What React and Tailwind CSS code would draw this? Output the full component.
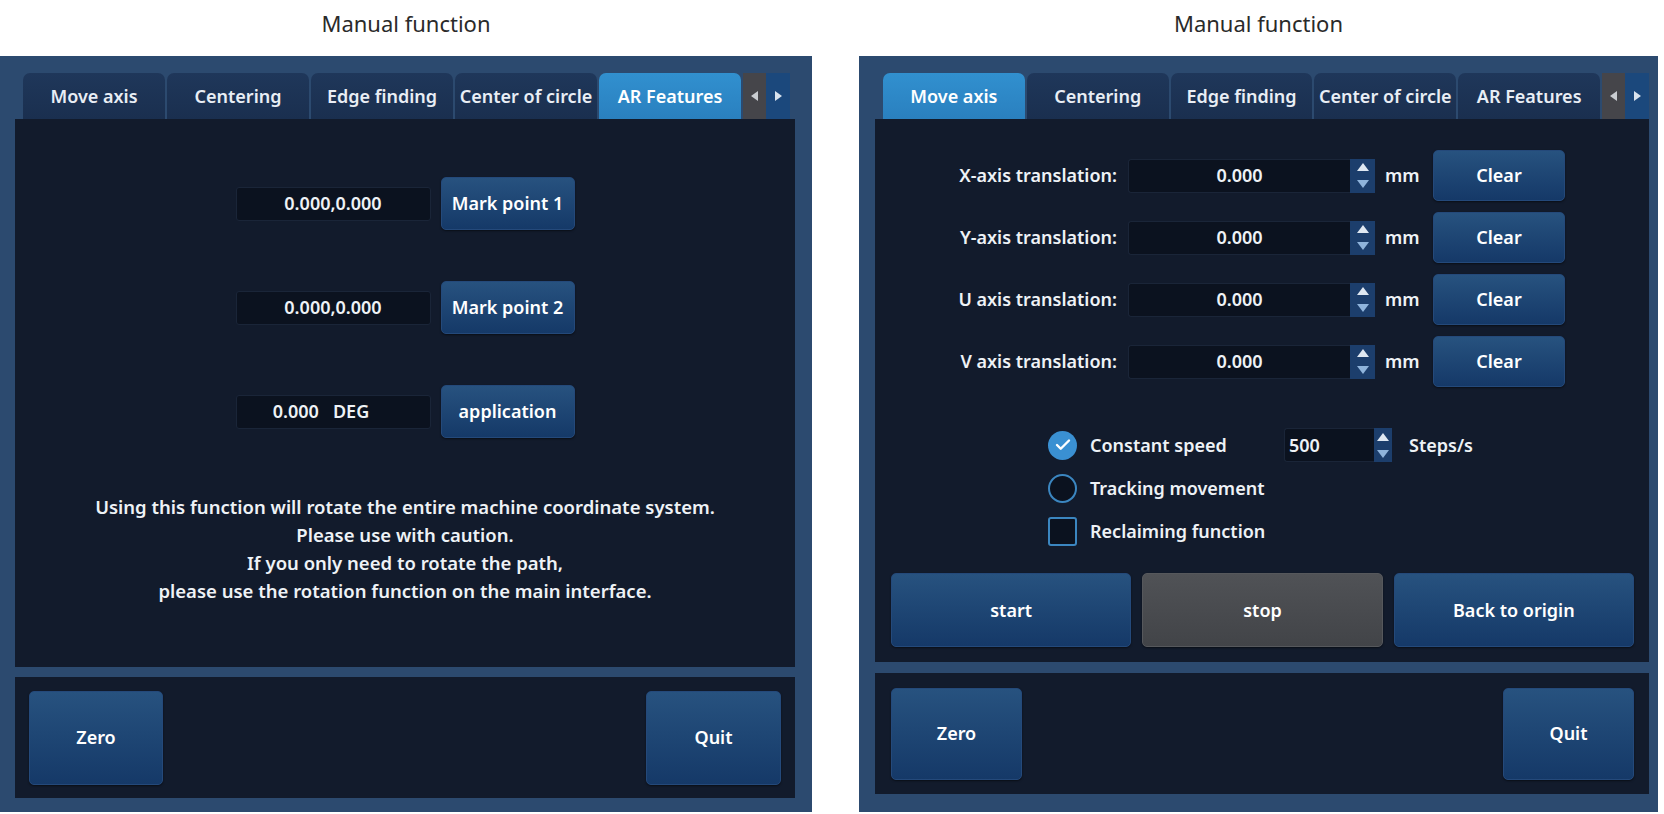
import React from "react";
import { Check } from "lucide-react";

const FONT = { fontFamily: '"Noto Sans", "Open Sans", sans-serif' };

const tabNames = ["Move axis", "Centering", "Edge finding", "Center of circle", "AR Features"];

function Tabs({ active }) {
  return (
    <div className="flex h-[46px] shrink-0 items-stretch pl-[8px]">
      {tabNames.map((name) => (
        <div
          key={name}
          className={`mr-[2px] flex w-[142px] items-center justify-center rounded-t-[7px] text-[18px] font-semibold whitespace-nowrap ${
            name === active
              ? "bg-linear-to-b from-[#3190cf] to-[#2a80bf] text-white"
              : "bg-linear-to-b from-[#1f375a] to-[#1a2f4f] text-[#e9eef5]"
          }`}
        >
          {name}
        </div>
      ))}
      {/* tab scroller */}
      <div className="flex w-[23px] items-center justify-center bg-[#45454a]">
        <svg width="7" height="10" viewBox="0 0 7 10">
          <polygon points="7,0 0,5 7,10" fill="#c9ccd1" />
        </svg>
      </div>
      <div className="flex w-[24px] items-center justify-center bg-[#1b487c]">
        <svg width="7" height="10" viewBox="0 0 7 10">
          <polygon points="0,0 7,5 0,10" fill="#d9e3ee" />
        </svg>
      </div>
    </div>
  );
}

function Btn({ children, className = "", gray }) {
  return (
    <div
      className={`flex items-center justify-center rounded-[5px] border text-[18px] font-semibold text-white shadow-[0_1px_2px_rgba(0,0,0,0.5)] ${
        gray
          ? "border-[#56585c] bg-linear-to-b from-[#505256] to-[#424448]"
          : "border-[#24497a] bg-linear-to-b from-[#27527f] to-[#153968]"
      } ${className}`}
    >
      {children}
    </div>
  );
}

function Spinner({ w = "w-[25px]" }) {
  return (
    <div className={`flex h-full ${w} flex-col bg-[#1c3e6c]`}>
      <div className="flex flex-1 items-center justify-center">
        <svg width="12" height="8" viewBox="0 0 12 8">
          <polygon points="0,8 6,0 12,8" fill="#dfe8f2" />
        </svg>
      </div>
      <div className="flex flex-1 items-center justify-center">
        <svg width="12" height="8" viewBox="0 0 12 8">
          <polygon points="0,0 12,0 6,8" fill="#8fb4dc" />
        </svg>
      </div>
    </div>
  );
}

function Title() {
  return (
    <div className="h-[56px] shrink-0 pt-[8px] text-center text-[22px] leading-[30px] text-[#2a2a2a]">
      Manual function
    </div>
  );
}

function MarkRow({ value, label }) {
  return (
    <div className="flex h-[53px] items-center gap-[10px]">
      <div className="flex h-[34px] w-[195px] items-center justify-center rounded-[3px] border border-[#1a2538] bg-[#0b121f] text-[18px] font-semibold text-[#eef2f6]">
        {value}
      </div>
      <Btn className="h-[53px] w-[134px]">{label}</Btn>
    </div>
  );
}

function LeftPanel() {
  return (
    <div className="flex w-[812px] shrink-0 flex-col">
      <Title />
      <div className="flex h-[756px] flex-col bg-[#2c4a6f] pt-[17px] pr-[17px] pb-[14px] pl-[15px]">
        <Tabs active="AR Features" />
        <div className="flex flex-1 flex-col items-center bg-[#121b2c] pt-[58px]">
          <div className="flex flex-col gap-[51px]">
            <MarkRow value="0.000,0.000" label="Mark point 1" />
            <MarkRow value="0.000,0.000" label="Mark point 2" />
            <MarkRow
              value={
                <span className="-ml-[24px] flex gap-[14px]">
                  <span>0.000</span>
                  <span>DEG</span>
                </span>
              }
              label="application"
            />
          </div>
          <div className="mt-[55px] text-center text-[18.5px] leading-[28px] font-semibold text-[#eef2f6]">
            <p>Using this function will rotate the entire machine coordinate system.</p>
            <p>Please use with caution.</p>
            <p>If you only need to rotate the path,</p>
            <p>please use the rotation function on the main interface.</p>
          </div>
        </div>
        <div className="mt-[10px] flex h-[121px] shrink-0 items-center justify-between bg-[#121b2c] px-[14px]">
          <Btn className="h-[94px] w-[134px]">Zero</Btn>
          <Btn className="h-[94px] w-[135px]">Quit</Btn>
        </div>
      </div>
    </div>
  );
}

function AxisRow({ label }) {
  return (
    <div className="flex h-[51px] items-center">
      <div className="w-[180px] text-right text-[18px] font-semibold text-[#eef2f6]">{label}</div>
      <div className="ml-[11px] flex h-[34px] items-stretch">
        <div className="flex w-[222px] items-center justify-center rounded-l-[3px] border border-r-0 border-[#1a2538] bg-[#0b121f] text-[18px] font-semibold text-[#eef2f6]">
          0.000
        </div>
        <Spinner />
      </div>
      <div className="ml-[10px] w-[37px] text-[18px] font-semibold text-[#eef2f6]">mm</div>
      <Btn className="ml-[11px] h-[51px] w-[132px]">Clear</Btn>
    </div>
  );
}

function Indicator({ kind }) {
  if (kind === "checked")
    return (
      <div className="flex h-[29px] w-[29px] items-center justify-center rounded-full bg-[#3a90d2]">
        <Check size={18} strokeWidth={3.2} color="white" />
      </div>
    );
  if (kind === "radio")
    return <div className="h-[29px] w-[29px] rounded-full border-2 border-[#3b86c0] bg-[#0b121f]" />;
  return <div className="h-[29px] w-[29px] rounded-[3px] border-2 border-[#3b86c0] bg-[#0b121f]" />;
}

function RightPanel() {
  return (
    <div className="flex w-[799px] shrink-0 flex-col">
      <Title />
      <div className="flex h-[756px] flex-col bg-[#2c4a6f] pt-[17px] pr-[9px] pb-[18px] pl-[16px]">
        <Tabs active="Move axis" />
        <div className="flex flex-1 flex-col bg-[#121b2c]">
          <div className="flex flex-col gap-[11px] pt-[31px] pl-[62px]">
            <AxisRow label="X-axis translation:" />
            <AxisRow label="Y-axis translation:" />
            <AxisRow label="U axis translation:" />
            <AxisRow label="V axis translation:" />
          </div>
          <div className="mt-[40px] flex flex-col gap-[7px] pl-[173px] text-[18px] font-semibold text-[#eef2f6]">
            <div className="flex h-[36px] items-center">
              <Indicator kind="checked" />
              <span className="ml-[13px] w-[194px]">Constant speed</span>
              <div className="flex h-[34px] items-stretch">
                <div className="flex w-[90px] items-center rounded-l-[3px] border border-r-0 border-[#1a2538] bg-[#0b121f] pl-[4px]">
                  500
                </div>
                <Spinner w="w-[18px]" />
              </div>
              <span className="ml-[17px]">Steps/s</span>
            </div>
            <div className="flex h-[36px] items-center">
              <Indicator kind="radio" />
              <span className="ml-[13px]">Tracking movement</span>
            </div>
            <div className="flex h-[36px] items-center">
              <Indicator kind="box" />
              <span className="ml-[13px]">Reclaiming function</span>
            </div>
          </div>
          <div className="mt-auto mb-[15px] flex gap-[11px] pr-[15px] pl-[16px]">
            <Btn className="h-[74px] flex-1">start</Btn>
            <Btn gray className="h-[74px] flex-1">stop</Btn>
            <Btn className="h-[74px] flex-1">Back to origin</Btn>
          </div>
        </div>
        <div className="mt-[11px] flex h-[121px] shrink-0 items-center justify-between bg-[#121b2c] pr-[15px] pl-[16px]">
          <Btn className="h-[92px] w-[131px]">Zero</Btn>
          <Btn className="h-[92px] w-[131px]">Quit</Btn>
        </div>
      </div>
    </div>
  );
}

export default function App() {
  return (
    <div className="flex h-[814px] w-[1664px] gap-[47px] overflow-hidden bg-white" style={FONT}>
      <LeftPanel />
      <RightPanel />
    </div>
  );
}
